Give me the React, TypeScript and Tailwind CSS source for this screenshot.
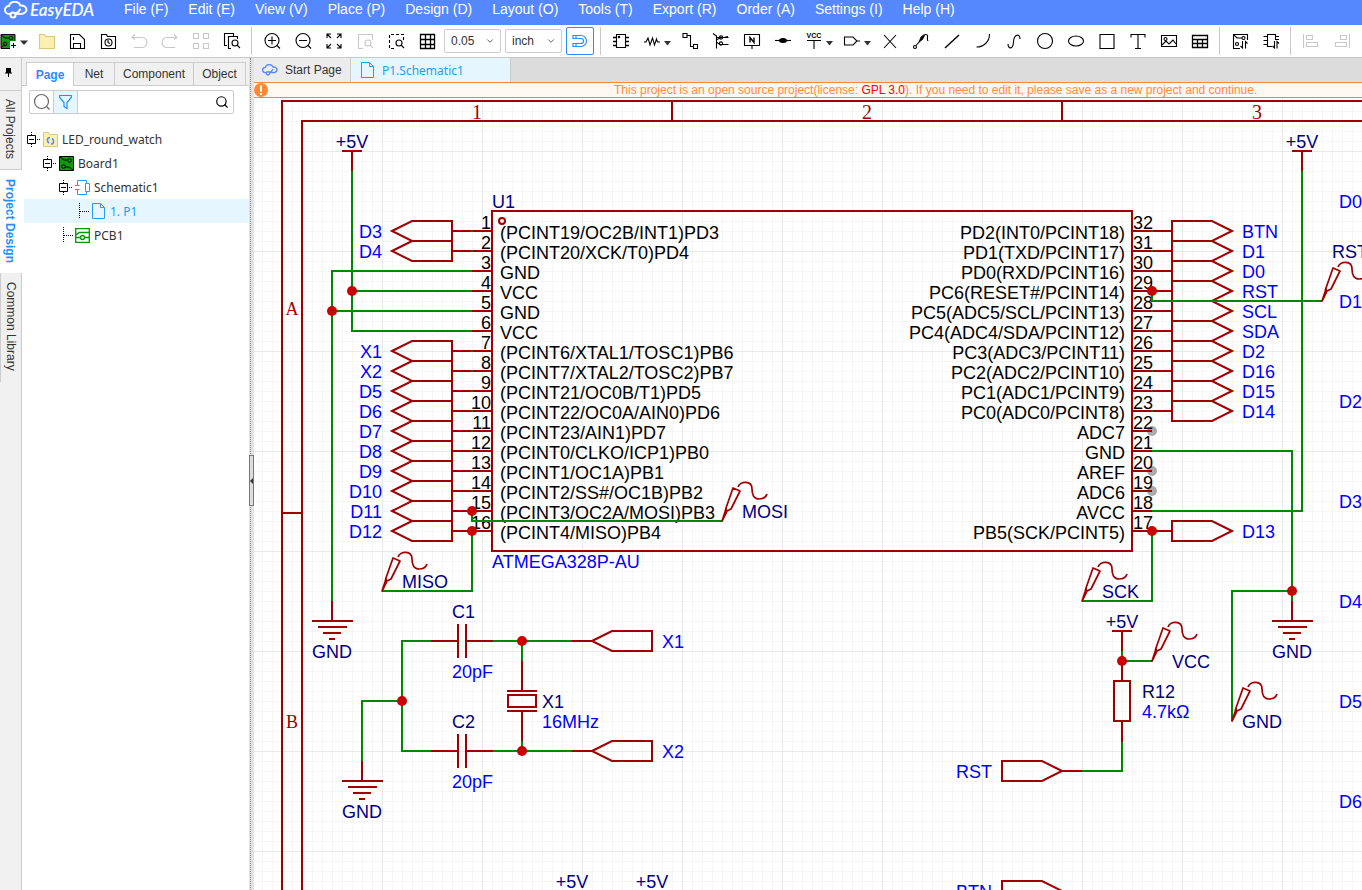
import type { ReactNode } from 'react';
import { ChevronDown, Search } from 'lucide-react';

const menus = ['File (F)', 'Edit (E)', 'View (V)', 'Place (P)', 'Design (D)', 'Layout (O)', 'Tools (T)', 'Export (R)', 'Order (A)', 'Settings (I)', 'Help (H)'];

const arial = "font-['Liberation_Sans',Arial,sans-serif]";
const noto = "font-['Noto_Sans',sans-serif]";

type Tool = { name: string; icon: ReactNode; caret?: boolean; dim?: boolean };

const lens = <><circle cx="12" cy="11" r="3" /><path d="M14.2 13.2 17 16" /></>;

const fileTools: Tool[] = [
  { name: 'Open', icon: <path d="M2.5 2.5h5l1.500 2h8.500v12h-15z" fill="#faf0b0" stroke="#dcc878" /> },
  { name: 'Save', icon: <><path d="M2.5 2.5h9l5 5v9h-14zM5.5 16.5v-5h7v5" /><path d="M5.500 5v3" /></> },
  { name: 'History', icon: <><path d="M2.5 2.5h5l1 2h8v12h-14z" /><circle cx="9.500" cy="10.500" r="3.500" /><path d="M9 8v2.500l2 1" /></> },
  { name: 'Undo', dim: true, icon: <><path d="M2 5.5h10a4.500 4.500 0 0 1 0 10H4" /><path d="M5 2.5 2 5.5l3 2" /></> },
  { name: 'Redo', dim: true, icon: <><path d="M16 5.5H6a4.500 4.500 0 0 0 0 10h8" /><path d="m13 2.5 3 3-3 2" /></> },
  { name: 'Arrange', dim: true, icon: <path d="M1.5 1.5h5v5h-5zM11.5 1.5h5v5h-5zM1.5 11.5h5v5h-5zM11.5 11.5h5v5h-5z" /> },
  { name: 'Find', icon: <><path d="M4 13.5H1.5v-12h9V4" /><path d="M8 16.5H5.5V4.5h9V7" />{lens}</> },
];

const viewTools: Tool[] = [
  { name: 'Zoom in', icon: <><circle cx="9" cy="8.500" r="7" /><path d="M5 8.500h8M9 4.500v8M14 13.500l3 3" /></> },
  { name: 'Zoom out', icon: <><circle cx="9" cy="8.500" r="7" /><path d="M5 8.500h8M14 13.500l3 3" /></> },
  { name: 'Fit', icon: <path d="M2 6V2h4M2 2l4 4M12 2h4v4M16 2l-4 4M2 12v4h4M2 16l4-4M16 12v4h-4M16 16l-4-4" /> },
  { name: 'Fit selection', dim: true, icon: <><path d="M7 16.5H2.5v-14h14V8" />{lens}</> },
  { name: 'Zoom area', icon: <><path d="M7 16.5H2.5v-14h14V8" strokeDasharray="3 2" />{lens}</> },
  { name: 'Grid', icon: <path d="M2.5 2.5h14v14h-14zM7.5 2.5v14M12.5 2.5v14M2.5 7.5h14M2.5 12.5h14" strokeWidth="1.300" /> },
];

const placeTools: Tool[] = [
  { name: 'Component', icon: <><path d="M4.5 2.5h9v13h-9z" /><path d="M1 5.5h3M1 9.5h3M1 13.5h3M14 5.5h3M14 9.5h3M14 13.5h3" strokeWidth="1.500" /><circle cx="7" cy="5" r=".7" /></> },
  { name: 'Resistor', caret: true, icon: <path d="M1 10h2l2-4 2 7 2.500-7 2 7 2-6 1 3H17" /> },
  { name: 'Wire', icon: <path d="M2 1.5h4v4H2zM12.5 12.5h4v4h-4zM6 3.5h3.500v11h3" /> },
  { name: 'Bus', icon: <><path d="M1 1.5 4.500 4v12.500M4.500 5.500h12M5 7.500l4-2M5 10.500l3 2h8.500M12 5.500l4-1" /><circle cx="9" cy="5.500" r="1.600" /><circle cx="9" cy="11.500" r="1.600" /></> },
  { name: 'Net label', icon: <><path d="M1.5 2.5h15v11h-15zM9 13.5V17" /><path d="M7 10.5v-5l4 5v-5" strokeWidth="1.400" /></> },
  { name: 'Junction', icon: <><path d="M1 8.500h16" /><ellipse cx="9" cy="8.500" rx="4" ry="2.500" fill="black" stroke="none" /></> },
  { name: 'VCC', caret: true, icon: <><text x="9" y="6" fontSize="7" fontWeight="700" textAnchor="middle" fill="black" stroke="none">VCC</text><path d="M2 8.5h14M9 8.5V17" /></> },
  { name: 'Port', caret: true, icon: <path d="M1.5 5H10l4 4-4 4H1.5zM14 9h3" /> },
  { name: 'No connect', icon: <path d="m3 3 12 13M15 3 3 16" /> },
  { name: 'Probe', icon: <><path d="m4 13.500 4-4.500" /><path d="M7 10 9 5l2.500-2 1 .5-2 4z" fill="black" strokeWidth=".8" /><path d="M12 3c3-1.500 4 .5 3.500 2.500S15.500 8 16 9" /><circle cx="3" cy="15" r="1.500" /></> },
  { name: 'Line', icon: <path d="M2 16 16 3" strokeWidth="1.400" /> },
  { name: 'Arc', icon: <path d="M15.5 2c0 8-6 13-13 13" /> },
  { name: 'Bezier', icon: <path d="M3 12c0 5 5 6 5.5-2S15 1 15 7" /> },
  { name: 'Circle', icon: <circle cx="9" cy="9" r="7.500" /> },
  { name: 'Ellipse', icon: <ellipse cx="9" cy="9" rx="7.500" ry="5" /> },
  { name: 'Rectangle', icon: <path d="M2 2.5h14v14H2z" /> },
  { name: 'Text', icon: <path d="M2 5.5v-3h14v3M9 2.5v14M6 16.5h6" /> },
  { name: 'Image', icon: <><path d="M1.5 3.5h15v11h-15z" /><circle cx="5.500" cy="7" r="1.500" /><path d="m2 13 4-4 3 3 4-4 3 4" /></> },
  { name: 'Table', icon: <path d="M1.5 3.5h15v12h-15zM1.5 7.5h15M1.5 11.5h15M6.5 7.5v8M11.5 7.5v8" strokeWidth="1.300" /> },
];

const convertTools: Tool[] = [
  { name: 'Convert to PCB', icon: <><path d="M16.5 8V2.5h-14v14H9M3 3l3 3h5" /><circle cx="12.500" cy="6" r="1.500" /><circle cx="6" cy="12" r="1.500" /><path d="M11.5 9v7l-2-2M14.5 16.5v-7l2 2" /></> },
  { name: 'Update footprint', icon: <path d="M10 14.5H5.5v-12h8V8M5 4.5H1.5M5 8.5H1.5M5 12.5H1.5M14 4.5h3M14 7.5h3M12.5 9v7l-2-2M15 16.5v-7l2 2" /> },
];

const alignTools: Tool[] = [
  { name: 'Align left', dim: true, icon: <path d="M1.5 2v14M4.5 3.5h6v4h-6zM4.5 10.5h11v4h-11z" /> },
  { name: 'Align right', dim: true, icon: <path d="M16.5 2v14M7.5 3.5h6v4h-6zM2.5 10.5h11v4h-11z" /> },
];

function ToolButton({ tool }: { tool: Tool }) {
  return (
    <button
      type="button"
      aria-label={tool.name}
      className={`flex h-8 shrink-0 items-center justify-center ${tool.caret ? 'w-[38px]' : 'w-[31px]'} ${tool.dim ? 'text-[#c8c8c8]' : 'text-black'}`}
    >
      <svg width="18" height="18" viewBox="0 0 18 18" fill="none" stroke="currentColor" strokeWidth="1.100">{tool.icon}</svg>
      {tool.caret && <svg width="7" height="5" viewBox="0 0 7 5" className="mt-1 -mr-1 ml-[3px]"><path d="M0 0h7L3.5 4.5z" fill="#333" /></svg>}
    </button>
  );
}

function Separator() {
  return <div className="mx-1 h-7 w-px shrink-0 bg-[#c8c8c8]" />;
}

function PickBox({ label, value }: { label: string; value: string }) {
  return (
    <div className="relative shrink-0">
      <select aria-label={label} className={`${arial} block h-6 w-[57px] appearance-none rounded-xs border border-[#ccc] bg-white pl-[6px] text-xs text-[#333]`}>
        <option>{value}</option>
      </select>
      <ChevronDown size={10} className="pointer-events-none absolute top-[7px] right-[6px] text-[#444]" />
    </div>
  );
}

function Cloud({ className }: { className: string }) {
  return (
    <svg viewBox="0 0 24 18" className={className} fill="none" stroke="currentColor" strokeWidth="2" strokeLinecap="round">
      <path d="M6 13H5a4 4 0 0 1 0-8c1.500-5 9-6 11.500-.5C22 4 24 9 21 11.500c-1.500 1.500-3 1.500-5 1.500L11 12.500" />
      <circle cx="9" cy="14" r="2.500" />
      <path d="M12 12.500c2-1 3-2 4-4" />
    </svg>
  );
}

function PageIcon() {
  return (
    <svg width="13" height="16" viewBox="0 0 13 16" fill="none" stroke="#2a9bf5"><path d="M.5.5h8l4 4v11H.5zM8.5.5v4h4" /></svg>
  );
}

function BoardIcon() {
  return (
    <svg width="15" height="15" viewBox="0 0 15 15" fill="none" stroke="black">
      <path d="M.5.5h14v14H.5z" fill="#109910" />
      <path d="M1 1l4 3h4M14 14l-4-3H6" />
      <circle cx="10.500" cy="4.500" r="1.800" />
      <circle cx="4.500" cy="10.500" r="1.800" />
    </svg>
  );
}

type Node = { label: string; indent: string; leaf?: boolean; active?: boolean; icon: ReactNode };

const tree: Node[] = [
  {
    label: 'LED_round_watch', indent: 'pl-[3px]',
    icon: <svg width="15" height="15" viewBox="0 0 15 15" fill="none"><path d="M.5.5h5l1 2h8v12H.5z" fill="#faf0b0" stroke="#dcc878" /><path d="M7 5.500c-3 0-3.500 4-1 5.500M8 12c3 0 3.500-4 1-5.500" stroke="#58f" strokeWidth="1.600" /></svg>,
  },
  { label: 'Board1', indent: 'pl-[19px]', icon: <BoardIcon /> },
  {
    label: 'Schematic1', indent: 'pl-[35px]',
    icon: <svg width="15" height="15" viewBox="0 0 15 15" fill="none" stroke="#2a9bf5"><path d="M2.5 5V.5h9v3M2.5 10v4.5h9v-3M0 5.5h4.500M0 9.5h4.500M10.5 3.5h4v8h-4z" /></svg>,
  },
  { label: '1. P1', indent: 'pl-[55px]', leaf: true, active: true, icon: <PageIcon /> },
  {
    label: 'PCB1', indent: 'pl-[39px]', leaf: true,
    icon: <svg width="15" height="15" viewBox="0 0 15 15" fill="none" stroke="#090" strokeWidth="1.300"><path d="M.7.7h13.600v13.600H.7zM1 7l3-2.500h10M1 9.5h4.500M9.5 9.5H14" /><circle cx="7.500" cy="9.500" r="2" /></svg>,
  },
];

function TreeRow({ node }: { node: Node }) {
  return (
    <li className={`flex h-6 items-center text-xs ${node.indent} ${node.active ? 'bg-[#e5f6ff] text-[#2a9bf5]' : 'text-[#333]'}`}>
      {node.leaf ? (
        <svg width="10" height="16" viewBox="0 0 10 16" stroke="black" strokeDasharray="1 1"><path d="M.5 0v16M1 8.5h9" /></svg>
      ) : (
        <svg width="13" height="15" viewBox="0 0 13 15" fill="none" stroke="black"><path d="M.5 3.5h8v8h-8zM2 7.5h5" /><path d="M4.5 0v3M4.5 12v3M10 7.5h3" strokeDasharray="1 1" /></svg>
      )}
      <span className={`flex w-[15px] shrink-0 justify-center ${node.leaf ? 'ml-[2px]' : 'ml-[3px]'}`}>{node.icon}</span>
      <span className={`${noto} ml-1 pt-px`}>{node.label}</span>
    </li>
  );
}

// ---- schematic sheet, 10 units per grid step ----

const RED = '#a00000';
const GREEN = '#008800';
const NAVY = '#000080';
const BLUE = '#0000ff';

const leftPins = [
  '(PCINT19/OC2B/INT1)PD3', '(PCINT20/XCK/T0)PD4', 'GND', 'VCC', 'GND', 'VCC', '(PCINT6/XTAL1/TOSC1)PB6', '(PCINT7/XTAL2/TOSC2)PB7',
  '(PCINT21/OC0B/T1)PD5', '(PCINT22/OC0A/AIN0)PD6', '(PCINT23/AIN1)PD7', '(PCINT0/CLKO/ICP1)PB0', '(PCINT1/OC1A)PB1',
  '(PCINT2/SS#/OC1B)PB2', '(PCINT3/OC2A/MOSI)PB3', '(PCINT4/MISO)PB4',
];
const rightPins = [
  'PD2(INT0/PCINT18)', 'PD1(TXD/PCINT17)', 'PD0(RXD/PCINT16)', 'PC6(RESET#/PCINT14)', 'PC5(ADC5/SCL/PCINT13)', 'PC4(ADC4/SDA/PCINT12)',
  'PC3(ADC3/PCINT11)', 'PC2(ADC2/PCINT10)', 'PC1(ADC1/PCINT9)', 'PC0(ADC0/PCINT8)', 'ADC7', 'GND', 'AREF', 'ADC6', 'AVCC', 'PB5(SCK/PCINT5)',
];
const leftNets = ['D3', 'D4', '', '', '', '', 'X1', 'X2', 'D5', 'D6', 'D7', 'D8', 'D9', 'D10', 'D11', 'D12'];
const rightNets = ['BTN', 'D1', 'D0', 'RST', 'SCL', 'SDA', 'D2', 'D16', 'D15', 'D14', '', '', '', '', '', 'D13'];

const wires = [
  'M350 170V330H470', 'M350 290H470', 'M470 270H330V601', 'M330 310H470',
  'M470 510V520H720', 'M470 530V590H380', 'M1150 290V300H1320',
  'M1150 450H1290V601', 'M1290 590H1230V720', 'M1150 510H1300V170', 'M1150 530V600H1080',
  'M430 640H400V750H430', 'M400 700H360V761', 'M490 640H571', 'M490 750H571', 'M520 640V661', 'M520 739V750',
  'M1120 650V660H1150', 'M1120 741V770H1080',
];
const junctions = [[350, 290], [330, 310], [470, 510], [470, 530], [1150, 290], [1150, 530], [1290, 590], [520, 640], [520, 750], [400, 700], [1120, 660]];

type LabelProps = { x: number; y: number; fill?: string; anchor?: 'start' | 'middle' | 'end'; children: ReactNode };

function Label({ x, y, fill = NAVY, anchor = 'start', children }: LabelProps) {
  return <text x={x} y={y} fill={fill} textAnchor={anchor} stroke="none">{children}</text>;
}

// x is the tip of the flag
function Flag({ x, y, right }: { x: number; y: number; right?: boolean }) {
  const d = right ? `M${x} ${y}l-20-10h-40v20h40z` : `M${x} ${y}l20-10h40v20h-40z`;
  return <path d={d} stroke={RED} />;
}

function Power({ x, y }: { x: number; y: number }) {
  return (
    <>
      <path d={`M${x - 10} ${y}h20M${x} ${y}v20`} stroke={RED} />
      <Label x={x} y={y - 3} anchor="middle">+5V</Label>
    </>
  );
}

function Ground({ x, y }: { x: number; y: number }) {
  return (
    <>
      <path d={`M${x} ${y}v20M${x - 20} ${y + 20}h41M${x - 14} ${y + 26}h29M${x - 9} ${y + 32}h18M${x - 3} ${y + 38}h6`} stroke={RED} />
      <Label x={x} y={y + 57} anchor="middle">GND</Label>
    </>
  );
}

function Probe({ x, y, lx, ly, name }: { x: number; y: number; lx: number; ly: number; name: string }) {
  return (
    <>
      <path
        transform={`translate(${x} ${y})`}
        stroke={RED}
        strokeWidth="1.700"
        strokeLinejoin="round"
        d="M0 0 3-9 4-13 11-33 18-30 9-12 5-10zM4-12 5-9M16-34C18-40 30-41 30-32 30-26 32-22 37-22 41-22 44-24 45-27"
      />
      <Label x={lx} y={ly}>{name}</Label>
    </>
  );
}

function Capacitor({ y, name }: { y: number; name: string }) {
  return (
    <>
      <path d={`M429 ${y}h27M456 ${y - 17}v34M464 ${y - 17}v34M464 ${y}h27`} stroke={RED} />
      <Label x={450} y={y - 23}>{name}</Label>
      <Label x={450} y={y + 37} fill={BLUE}>20pF</Label>
    </>
  );
}

function Schematic() {
  return (
    <svg className={`${arial} block h-full w-full bg-white text-lg`} fill="none" strokeWidth="2">
      <defs>
        <pattern id="minor" width="10" height="10" patternUnits="userSpaceOnUse"><path d="M.5 0v10M0 .5h10" stroke="#f6f6f4" strokeWidth="1" /></pattern>
        <pattern id="major" x="80" y="50" width="100" height="100" patternUnits="userSpaceOnUse"><path d="M.5 0v100M0 .5h100" stroke="#e9e9e9" strokeWidth="1" /></pattern>
      </defs>
      <g transform="translate(-252 -97)">
        <rect width="4000" height="3000" fill="url(#minor)" stroke="none" />
        <rect width="4000" height="3000" fill="url(#major)" stroke="none" />

        <path d="M280 2000V100H3000M300 2000V120H3000M670 100v20M1060 100v20M280 512h20" stroke={RED} />
        <g className="font-['Liberation_Serif',serif] text-xl">
          <Label x={475} y={118} fill={RED} anchor="middle">1</Label>
          <Label x={865} y={118} fill={RED} anchor="middle">2</Label>
          <Label x={1255} y={118} fill={RED} anchor="middle">3</Label>
        </g>
        <g className="font-['Liberation_Serif',serif] text-lg">
          <Label x={290} y={314} fill={RED} anchor="middle">A</Label>
          <Label x={290} y={727} fill={RED} anchor="middle">B</Label>
        </g>

        <path d="M490 210h640v340H490z" stroke={RED} />
        <circle cx="500" cy="220" r="3" stroke={RED} />
        <Label x={490} y={207}>U1</Label>
        <Label x={490} y={567} fill={BLUE}>ATMEGA328P-AU</Label>

        {leftPins.map((name, i) => {
          const y = 230 + i * 20;
          return (
            <g key={i}>
              <path d={`M${leftNets[i] ? 450 : 470} ${y}H490`} stroke={RED} />
              {leftNets[i] && <Flag x={390} y={y} />}
              {leftNets[i] && <circle cx="470" cy={y} r="1" fill={GREEN} stroke="none" />}
              {leftNets[i] && <Label x={380} y={y + 7} fill={BLUE} anchor="end">{leftNets[i]}</Label>}
              <Label x={489} y={y - 2} fill="black" anchor="end">{i + 1}</Label>
              <Label x={498} y={y + 8} fill="black">{name}</Label>
            </g>
          );
        })}
        {[430, 470, 490].map((y) => <circle key={y} cx="1150" cy={y} r="5" fill="#aaa" stroke="none" />)}
        {rightPins.map((name, i) => {
          const y = 230 + i * 20;
          return (
            <g key={i}>
              <path d={`M1130 ${y}H${rightNets[i] ? 1170 : 1150}`} stroke={RED} />
              {rightNets[i] && <Flag x={1230} y={y} right />}
              {rightNets[i] && <circle cx="1150" cy={y} r="1" fill={GREEN} stroke="none" />}
              {rightNets[i] && <Label x={1240} y={y + 7} fill={BLUE}>{rightNets[i]}</Label>}
              <Label x={1131} y={y - 2} fill="black">{32 - i}</Label>
              <Label x={1123} y={y + 8} fill="black" anchor="end">{name}</Label>
            </g>
          );
        })}

        {wires.map((d) => <path key={d} d={d} stroke={GREEN} />)}

        <Power x={350} y={150} />
        <Power x={1300} y={150} />
        <Power x={1120} y={630} />
        <Power x={570} y={890} />
        <Power x={650} y={890} />
        <Ground x={330} y={600} />
        <Ground x={360} y={760} />
        <Ground x={1290} y={600} />

        <Capacitor y={640} name="C1" />
        <Capacitor y={750} name="C2" />
        <path d="M570 640h20M570 750h20M520 660v30M520 710v30M505 690h30M505 710h30M506 694h28v12h-28z" stroke={RED} />
        <Flag x={590} y={640} />
        <Flag x={590} y={750} />
        <Label x={660} y={647} fill={BLUE}>X1</Label>
        <Label x={660} y={757} fill={BLUE}>X2</Label>
        <Label x={540} y={707}>X1</Label>
        <Label x={540} y={727} fill={BLUE}>16MHz</Label>

        <path d="M1120 660v20M1112 680h16v40h-16zM1120 720v21M1060 770h20M1060 890h20" stroke={RED} />
        <Label x={1140} y={697}>R12</Label>
        <Label x={1140} y={717} fill={BLUE}>4.7kΩ</Label>
        <Flag x={1060} y={770} right />
        <Label x={990} y={777} fill={BLUE} anchor="end">RST</Label>
        <Flag x={1060} y={890} right />
        <Label x={990} y={897} fill={BLUE} anchor="end">BTN</Label>

        {junctions.map(([x, y]) => <circle key={`${x}-${y}`} cx={x} cy={y} r="5" fill="#cc0000" stroke="none" />)}

        <Probe x={380} y={590} lx={400} ly={587} name="MISO" />
        <Probe x={720} y={520} lx={740} ly={517} name="MOSI" />
        <Probe x={1080} y={600} lx={1100} ly={597} name="SCK" />
        <Probe x={1150} y={660} lx={1170} ly={667} name="VCC" />
        <Probe x={1230} y={720} lx={1240} ly={727} name="GND" />
        <Probe x={1320} y={300} lx={1330} ly={257} name="RST" />
        {[0, 1, 2, 3, 4, 5, 6].map((n) => <Label key={n} x={1337} y={207 + n * 100} fill={BLUE}>{`D${n}`}</Label>)}
      </g>
    </svg>
  );
}

export default function App() {
  return (
    <div className={`${arial} flex h-screen flex-col overflow-hidden bg-white text-xs text-[#333]`}>
      <header className="flex h-[25px] shrink-0 items-start overflow-hidden bg-[#5588ff] text-white">
        <div className="flex w-[124px] shrink-0 items-center pl-1">
          <Cloud className="h-[18px] w-6" />
          <span className="ml-[2px] font-['Lato',sans-serif] text-[17px] leading-5 font-semibold italic">EasyEDA</span>
        </div>
        <nav className="flex gap-5 text-sm leading-[18px] whitespace-nowrap">
          {menus.map((m) => <button key={m} type="button">{m}</button>)}
        </nav>
      </header>

      <div className="flex h-[33px] shrink-0 items-center overflow-hidden border-b border-[#c8c8c8] bg-white">
        <button type="button" aria-label="New" className="flex w-[30px] shrink-0 items-center">
          <svg width="29" height="18" viewBox="0 0 29 18" fill="none" stroke="black">
            <path d="M1 2.5h14v14H1z" fill="#109910" />
            <path d="M1 3l4 3h4M1 16l4-4" />
            <circle cx="11" cy="6" r="1.800" />
            <circle cx="5" cy="12" r="1.800" />
            <path d="M10 9h7v8h-7z" fill="white" stroke="none" />
            <path d="M13.5 11v5M11 13.5h5" />
            <path d="M20 8.500h8l-4 4.500z" fill="#333" stroke="none" />
          </svg>
        </button>
        {fileTools.map((t) => <ToolButton key={t.name} tool={t} />)}
        <Separator />
        {viewTools.map((t) => <ToolButton key={t.name} tool={t} />)}
        <div className="ml-[2px] flex shrink-0 items-center gap-1 pr-[2px]">
          <PickBox label="Grid size" value="0.05" />
          <PickBox label="Unit" value="inch" />
          <button type="button" aria-label="Snap" className="flex size-7 items-center justify-center rounded-xs border border-[#2a8cf5] text-[#2a8cf5]">
            <svg width="16" height="14" viewBox="0 0 16 14" fill="none" stroke="currentColor" strokeWidth="1.200">
              <path d="M1 1.5h8a5.5 5.5 0 0 1 0 11H1v-3h8a2.5 2.5 0 0 0 0-5H1zM4 1.5v3M4 9.5v3" />
            </svg>
          </button>
        </div>
        <Separator />
        {placeTools.map((t) => <ToolButton key={t.name} tool={t} />)}
        <Separator />
        {convertTools.map((t) => <ToolButton key={t.name} tool={t} />)}
        <Separator />
        {alignTools.map((t) => <ToolButton key={t.name} tool={t} />)}
      </div>

      <div className="flex min-h-0 flex-1">
        <aside className="flex w-[22px] shrink-0 flex-col bg-[#f0f0f0]">
          <button type="button" aria-label="Pin panel" className="flex h-[33px] items-start justify-center border-r border-b border-[#ccc] pt-[10px] pr-[5px]">
            <svg width="7" height="9" viewBox="0 0 7 9"><path d="M1 0h5v4.5h1v1H4V9H3V5.5H0v-1h1z" fill="black" /></svg>
          </button>
          <button type="button" className="flex h-[79px] items-center justify-center border-r border-b border-[#ccc] pr-px pb-[2px] [writing-mode:vertical-rl]">All Projects</button>
          <button type="button" className="flex h-[103px] items-center justify-center bg-white pr-[2px] font-bold text-[#1e90ff] [writing-mode:vertical-rl]">Project Design</button>
          <button type="button" className="flex h-[109px] items-center justify-center border-y border-r border-[#ccc] pr-px pb-[2px] [writing-mode:vertical-rl]">Common Library</button>
          <div className="flex-1 border-r border-[#ccc]" />
        </aside>

        <section className="flex w-[227px] shrink-0 flex-col bg-white">
          <div className="flex h-7 items-end border-b border-[#ccc] bg-[#f0f0f0] pl-1">
            <button type="button" className="-mb-px h-6 w-12 border border-b-0 border-[#ccc] bg-white font-bold text-[#1e90ff]">Page</button>
            <button type="button" className="h-[23px] w-[41px] border-t border-r border-[#ccc]">Net</button>
            <button type="button" className="h-[23px] w-[79px] border-t border-r border-[#ccc]">Component</button>
            <button type="button" className="h-[23px] w-[52px] border-t border-r border-[#ccc]">Object</button>
          </div>
          <div className="mt-1 mr-[15px] ml-[7px] flex h-6 items-center rounded-xs border border-[#ccc]">
            <button type="button" aria-label="Search mode" className="flex w-[23px] justify-center text-[#666]">
              <svg width="18" height="18" viewBox="0 0 18 18" fill="none" stroke="currentColor" strokeWidth="1.200"><circle cx="8.500" cy="8.500" r="7" /><path d="m13.500 13.500 3 3" /></svg>
            </button>
            <button type="button" aria-label="Filter" className="flex h-full w-[25px] items-center justify-center border-x border-[#ccc] bg-[#e5f6ff] text-[#1e90ff]">
              <svg width="13" height="16" viewBox="0 0 13 16" fill="none" stroke="currentColor" strokeWidth="1.200"><path d="M.7 1.500h11.600v2L8 8.500v6l-3-2v-4L.7 3.500z" /></svg>
            </button>
            <input aria-label="Filter text" className="h-full min-w-0 flex-1 px-1 outline-none" />
            <button type="button" aria-label="Search" className="pr-1 text-black"><Search size={14} strokeWidth={2} /></button>
          </div>
          <ul className="mt-[13px] ml-[2px]">
            {tree.map((n) => <TreeRow key={n.label} node={n} />)}
          </ul>
        </section>

        <div className="relative w-[5px] shrink-0 bg-[#e2e2e2]">
          <div className="ml-px h-full w-px border-l border-dotted border-[#888]" />
          <div className="absolute top-[397px] left-0 flex h-[51px] w-[5px] items-center border border-[#777] bg-[#ddd]">
            <svg width="3" height="6" viewBox="0 0 3 6"><path d="M3 0v6L0 3z" fill="#333" /></svg>
          </div>
        </div>

        <main className="flex min-w-0 flex-1 flex-col">
          <div className="flex h-6 shrink-0 bg-[#dcdcdc]">
            <button type="button" className="flex w-[97px] items-center border-r border-[#ccc] bg-[#ececec] pl-2">
              <Cloud className="h-3 w-4 text-[#5588ff]" />
              <span className="ml-[7px]">Start Page</span>
            </button>
            <button type="button" className={`${noto} flex w-40 items-center border-r border-[#ccc] bg-[#e5f6ff] pl-[10px] text-[#2a9bf5]`}>
              <PageIcon />
              <span className="ml-2 pt-px">P1.Schematic1</span>
            </button>
          </div>
          <div className="flex h-4 shrink-0 items-center border-y border-[#ff8833] bg-[#fff7f2] whitespace-nowrap text-[#ff8c40]">
            <svg width="14" height="14" viewBox="0 0 14 14" className="shrink-0"><circle cx="7" cy="7" r="7" fill="#ff8833" /><path d="M6 2.5h2v6H6zM6 10h2v2H6z" fill="white" /></svg>
            <p className="ml-[346px] leading-[14px]">
              This project is an open source project(license: <a href="#license" className="text-[#ff0000]">GPL 3.0</a>). If you need to edit it, please save as a new project and continue.
            </p>
          </div>
          <div className="min-h-0 flex-1">
            <Schematic />
          </div>
        </main>
      </div>
    </div>
  );
}
